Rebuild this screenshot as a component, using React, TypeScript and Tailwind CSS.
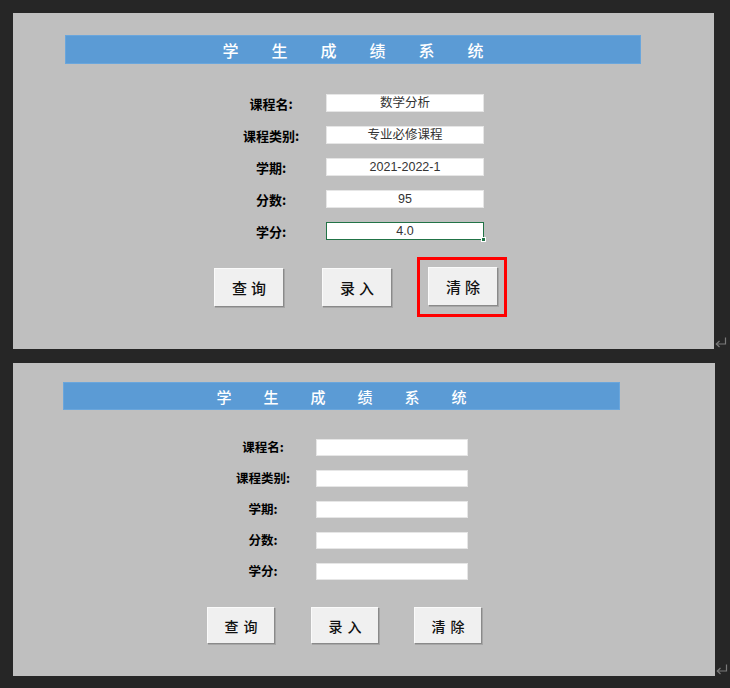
import React from "react";

const CJK = { fontFamily: '"Noto Sans CJK SC", "Noto Sans", sans-serif' };
const NUM = { fontFamily: '"Liberation Sans", "Noto Sans CJK SC", sans-serif' };

function Title({ size, gap }: { size: string; gap: string }) {
  const chars = ["学", "生", "成", "绩", "系", "统"];
  return (
    <div className={`flex h-full items-center justify-center ${gap}`}>
      {chars.map((c) => (
        <span key={c} className={`${size} font-medium leading-none text-white`} style={CJK}>
          {c}
        </span>
      ))}
    </div>
  );
}

function Btn({ a, b, w, h, fs, gap }: { a: string; b: string; w: string; h: string; fs: string; gap: string }) {
  return (
    <div
      className={`${w} ${h} flex items-center justify-center ${gap} border border-t-[#fafafa] border-l-[#fafafa] border-r-[#8a8a8a] border-b-[#8a8a8a] bg-[#f0f0f0] shadow-[1px_1px_0_#a6a6a6] text-[#111]`}
      style={CJK}
    >
      <span className={`${fs} font-medium leading-none`}>{a}</span>
      <span className={`${fs} font-medium leading-none`}>{b}</span>
    </div>
  );
}

function Arrow() {
  return (
    <svg width="12" height="11" viewBox="0 0 12 11" className="ml-[1px] mb-[1px]" fill="none" stroke="#7a7a7a" strokeWidth="1.2">
      <path d="M10.5 0.5 V7 H1.5" />
      <path d="M4.5 4 L1.3 7 L4.5 10" />
    </svg>
  );
}

export default function App() {
  const labels = ["课程名:", "课程类别:", "学期:", "分数:", "学分:"];
  const values = ["数学分析", "专业必修课程", "2021-2022-1", "95", "4.0"];
  return (
    <div className="w-[730px] h-[688px] bg-[#262626] pt-[13px] pl-[13px] overflow-hidden">
      {/* Panel 1 */}
      <div className="flex items-end">
        <div className="w-[701px] h-[336px] bg-[#bfbfbf] flex flex-col">
          <div className="ml-[52px] mt-[22px] w-[576px] h-[29px] bg-[#5b9bd5] border border-[#6aa6dc]">
            <Title size="text-[16px]" gap="gap-[33px]" />
          </div>
          <div className="mt-[30px] flex flex-col gap-[14px]">
            {labels.map((l, i) => (
              <div key={l} className="flex items-center h-[18px]">
                <div className="ml-[223px] w-[70px] text-center text-[13px] font-bold text-black leading-none" style={CJK}>
                  {l}
                </div>
                <div
                  className={`relative ml-[20px] w-[158px] h-[18px] bg-white flex items-center justify-center text-[12.5px] text-[#333] leading-none ${
                    i === 4 ? "border border-[#217346]" : "border border-[#e6e6e6]"
                  }`}
                  style={NUM}
                >
                  {values[i]}
                  {i === 4 && (
                    <span className="absolute right-[-3px] bottom-[-3px] w-[3px] h-[3px] bg-[#217346] border border-white box-content" />
                  )}
                </div>
              </div>
            ))}
          </div>
          <div className="mt-[17px] ml-[201px] flex items-center">
            <Btn a="查" b="询" w="w-[70px]" h="h-[39px]" fs="text-[15px]" gap="gap-[4px]" />
            <div className="ml-[38px]">
              <Btn a="录" b="入" w="w-[70px]" h="h-[39px]" fs="text-[15px]" gap="gap-[4px]" />
            </div>
            <div className="ml-[25px] border-[3px] border-[#ff0000] pl-[8px] pr-[6px] pt-[7px] pb-[8px]">
              <Btn a="清" b="除" w="w-[70px]" h="h-[39px]" fs="text-[15px]" gap="gap-[4px]" />
            </div>
          </div>
        </div>
        <Arrow />
      </div>

      {/* Panel 2 */}
      <div className="mt-[14px] flex items-end">
        <div className="w-[702px] h-[313px] bg-[#bfbfbf] flex flex-col">
          <div className="ml-[50px] mt-[19px] w-[557px] h-[28px] bg-[#5b9bd5] border border-[#6aa6dc]">
            <Title size="text-[15px]" gap="gap-[32px]" />
          </div>
          <div className="mt-[29px] flex flex-col gap-[14px]">
            {labels.map((l) => (
              <div key={l} className="flex items-center h-[17px]">
                <div className="ml-[215px] w-[70px] text-center text-[12.5px] font-bold text-black leading-none" style={CJK}>
                  {l}
                </div>
                <div className="ml-[18px] w-[152px] h-[17px] bg-white border border-[#e6e6e6]" />
              </div>
            ))}
          </div>
          <div className="mt-[27px] ml-[194px] flex items-center">
            <Btn a="查" b="询" w="w-[68px]" h="h-[37px]" fs="text-[14px]" gap="gap-[5px]" />
            <div className="ml-[36px]">
              <Btn a="录" b="入" w="w-[68px]" h="h-[37px]" fs="text-[14px]" gap="gap-[5px]" />
            </div>
            <div className="ml-[35px]">
              <Btn a="清" b="除" w="w-[68px]" h="h-[37px]" fs="text-[14px]" gap="gap-[5px]" />
            </div>
          </div>
        </div>
        <Arrow />
      </div>
    </div>
  );
}
